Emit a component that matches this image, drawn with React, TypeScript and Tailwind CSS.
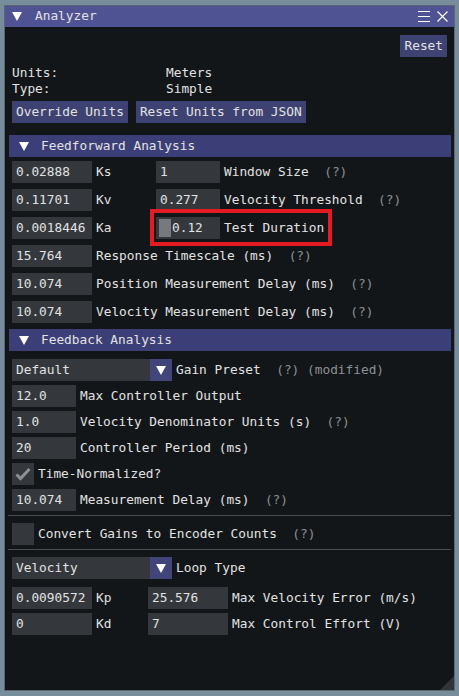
import React from 'react';

const mono = { fontFamily: '"DejaVu Sans Mono", "Liberation Mono", monospace' };

function Tri({ className = '' }: { className?: string }) {
  return (
    <svg width="10" height="9" viewBox="0 0 10 9" className={className}>
      <polygon points="0,0 10,0 5,9" fill="#ffffff" />
    </svg>
  );
}

function Field({ value, w, grab = false }: { value: string; w: string; grab?: boolean }) {
  return (
    <div className={`relative h-[22px] ${w} bg-[#34383c] flex items-center ${grab ? 'pl-[16px]' : 'pl-[4px]'} shrink-0`}>
      {grab && <div className="absolute left-[3px] top-[2px] w-[12px] h-[18px] bg-[#767a7e]" />}
      {value}
    </div>
  );
}

function Help({ text = '(?)' }: { text?: string }) {
  return <span className="text-[#8c8f93]">{text}</span>;
}

function Header({ title, className = '' }: { title: string; className?: string }) {
  return (
    <div className={`h-[22px] -ml-[3px] -mr-[4px] bg-[#3c3e77] flex items-center pl-[10px] gap-[12px] ${className}`}>
      <Tri />
      <span>{title}</span>
    </div>
  );
}

function Combo({ value }: { value: string }) {
  return (
    <div className="flex h-[22px] shrink-0">
      <div className="w-[138px] bg-[#34383c] flex items-center pl-[4px]">{value}</div>
      <div className="w-[22px] bg-[#41457a] flex items-center justify-center">
        <Tri />
      </div>
    </div>
  );
}

function Row({ children, className = '' }: { children: React.ReactNode; className?: string }) {
  return <div className={`relative flex items-center h-[22px] ${className}`}>{children}</div>;
}

export default function App() {
  return (
    <div className="w-[459px] h-[696px] bg-[#778d9b] pl-[4px] pt-[5px]" style={mono}>
      <div className="relative w-[451px] h-[686px] border border-[#5b6670] bg-[#131619] text-[#e2e2e2] text-[12.8px] leading-none flex flex-col">
        {/* title bar */}
        <div className="h-[21px] bg-[#4f5293] flex items-center pl-[7px] pr-[6px] shrink-0">
          <Tri className="mr-[13px]" />
          <span>Analyzer</span>
          <div className="ml-auto flex items-center gap-[7px]">
            <svg width="12" height="11" viewBox="0 0 12 11">
              <path d="M0 0.5H12M0 5.5H12M0 10.5H12" stroke="#ffffff" strokeWidth="1" />
            </svg>
            <svg width="11" height="11" viewBox="0 0 11 11">
              <path d="M0.5 0.5L10.5 10.5M10.5 0.5L0.5 10.5" stroke="#ffffff" strokeWidth="1.2" />
            </svg>
          </div>
        </div>

        {/* body */}
        <div className="flex flex-col px-[7px]">
          <div className="mt-[8px] flex justify-end">
            <div className="h-[22px] px-[4px] bg-[#3e4272] flex items-center">Reset</div>
          </div>

          <div className="mt-[8px] h-[16px] flex items-center">
            <span className="w-[154px]">Units:</span>
            <span>Meters</span>
          </div>
          <div className="h-[16px] flex items-center">
            <span className="w-[154px]">Type:</span>
            <span>Simple</span>
          </div>

          <div className="mt-[4px] flex gap-[8px]">
            <div className="h-[22px] px-[4px] bg-[#3e4272] flex items-center">Override Units</div>
            <div className="h-[22px] px-[4px] bg-[#3e4272] flex items-center">Reset Units from JSON</div>
          </div>

          <Header title="Feedforward Analysis" className="mt-[12px]" />

          <div className="mt-[4px] flex flex-col gap-[6px]">
            <Row>
              <Field value="0.02888" w="w-[80px]" />
              <span className="ml-[4px] w-[60px]">Ks</span>
              <Field value="1" w="w-[64px]" />
              <span className="ml-[4px]">Window Size&nbsp;&nbsp;<Help /></span>
            </Row>
            <Row>
              <Field value="0.11701" w="w-[80px]" />
              <span className="ml-[4px] w-[60px]">Kv</span>
              <Field value="0.277" w="w-[64px]" />
              <span className="ml-[4px]">Velocity Threshold&nbsp;&nbsp;<Help /></span>
            </Row>
            <Row>
              <Field value="0.0018446" w="w-[80px]" />
              <span className="ml-[4px] w-[60px]">Ka</span>
              <Field value="0.12" w="w-[64px]" grab />
              <span className="ml-[4px]">Test Duration</span>
              <div className="absolute left-[138px] -top-[8px] w-[182px] h-[37px] border-[4px] border-[#e41b23]" />
            </Row>
            <Row>
              <Field value="15.764" w="w-[80px]" />
              <span className="ml-[4px]">Response Timescale (ms)&nbsp;&nbsp;<Help /></span>
            </Row>
            <Row>
              <Field value="10.074" w="w-[80px]" />
              <span className="ml-[4px]">Position Measurement Delay (ms)&nbsp;&nbsp;<Help /></span>
            </Row>
            <Row>
              <Field value="10.074" w="w-[80px]" />
              <span className="ml-[4px]">Velocity Measurement Delay (ms)&nbsp;&nbsp;<Help /></span>
            </Row>
          </div>

          <Header title="Feedback Analysis" className="mt-[6px]" />

          <Row className="mt-[8px]">
            <Combo value="Default" />
            <span className="ml-[4px]">Gain Preset&nbsp;&nbsp;<Help /> <Help text="(modified)" /></span>
          </Row>

          <div className="mt-[4px] flex flex-col gap-[4px]">
            <Row>
              <Field value="12.0" w="w-[64px]" />
              <span className="ml-[4px]">Max Controller Output</span>
            </Row>
            <Row>
              <Field value="1.0" w="w-[64px]" />
              <span className="ml-[4px]">Velocity Denominator Units (s)&nbsp;&nbsp;<Help /></span>
            </Row>
            <Row>
              <Field value="20" w="w-[64px]" />
              <span className="ml-[4px]">Controller Period (ms)</span>
            </Row>
            <Row>
              <div className="w-[22px] h-[22px] bg-[#34383c] flex items-center justify-center">
                <svg width="16" height="14" viewBox="0 0 16 14">
                  <path d="M1.5 7.5L5.5 11.5L14.5 2" stroke="#8e9296" strokeWidth="3" fill="none" />
                </svg>
              </div>
              <span className="ml-[4px]">Time-Normalized?</span>
            </Row>
            <Row>
              <Field value="10.074" w="w-[64px]" />
              <span className="ml-[4px]">Measurement Delay (ms)&nbsp;&nbsp;<Help /></span>
            </Row>
          </div>

          <div className="mt-[4px] -ml-[4px] -mr-[4px] h-px bg-[#4a4e54]" />

          <Row className="mt-[7px]">
            <div className="w-[22px] h-[22px] bg-[#34383c]" />
            <span className="ml-[4px]">Convert Gains to Encoder Counts&nbsp;&nbsp;<Help /></span>
          </Row>

          <div className="mt-[4px] -ml-[4px] -mr-[4px] h-px bg-[#4a4e54]" />

          <Row className="mt-[7px]">
            <Combo value="Velocity" />
            <span className="ml-[4px]">Loop Type</span>
          </Row>

          <div className="mt-[8px] flex flex-col gap-[4px]">
            <Row>
              <Field value="0.0090572" w="w-[80px]" />
              <span className="ml-[4px] w-[52px]">Kp</span>
              <Field value="25.576" w="w-[80px]" />
              <span className="ml-[4px]">Max Velocity Error (m/s)</span>
            </Row>
            <Row>
              <Field value="0" w="w-[80px]" />
              <span className="ml-[4px] w-[52px]">Kd</span>
              <Field value="7" w="w-[80px]" />
              <span className="ml-[4px]">Max Control Effort (V)</span>
            </Row>
          </div>
        </div>

        {/* resize grip */}
        <svg width="14" height="14" viewBox="0 0 14 14" className="absolute right-0 bottom-0">
          <polygon points="14,0 14,14 0,14" fill="#2f353b" />
        </svg>
      </div>
    </div>
  );
}
